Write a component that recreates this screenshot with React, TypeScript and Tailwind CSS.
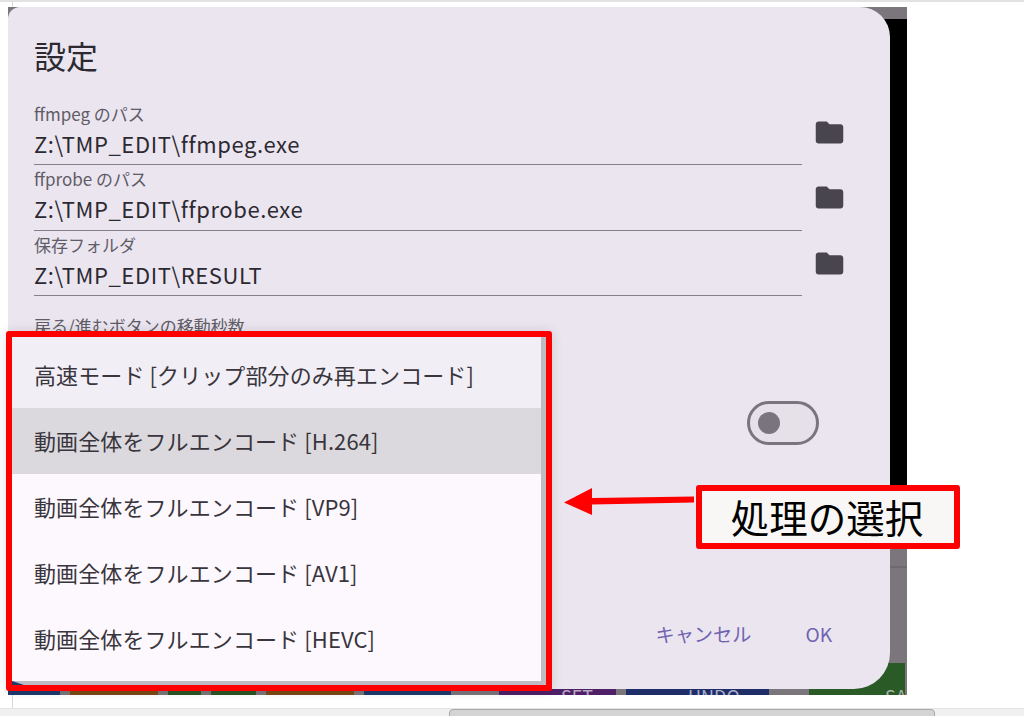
const fontStack = "font-['Noto_Sans_CJK_JP','Noto_Sans',sans-serif]"

const paths = [
  { label: "ffmpeg のパス", value: "Z:\\TMP_EDIT\\ffmpeg.exe" },
  { label: "ffprobe のパス", value: "Z:\\TMP_EDIT\\ffprobe.exe" },
  { label: "保存フォルダ", value: "Z:\\TMP_EDIT\\RESULT" },
]

const modes = [
  { text: "高速モード [クリップ部分のみ再エンコード]", row: "bg-[#f2eef5] h-[71px] pt-[3px]" },
  { text: "動画全体をフルエンコード [H.264]", row: "bg-[#dcd9de] h-[66px] pb-[2px]" },
  { text: "動画全体をフルエンコード [VP9]", row: "bg-[#fdf8fd] h-[66px] pb-[2px]" },
  { text: "動画全体をフルエンコード [AV1]", row: "bg-[#fdf8fd] h-[66px] pb-[2px]" },
  { text: "動画全体をフルエンコード [HEVC]", row: "bg-[#fdf8fd] h-[75px] pb-[11px]" },
]

function FolderIcon() {
  return (
    <svg viewBox="0 0 24 24" className="w-[33px] h-[33px] fill-[#49454f]">
      <path d="M10 4H4c-1.1 0-2 .9-2 2v12c0 1.1.9 2 2 2h16c1.1 0 2-.9 2-2V8c0-1.1-.9-2-2-2h-8l-2-2z" />
    </svg>
  )
}

function PathField({ label, value }: { label: string; value: string }) {
  return (
    <div className="flex h-[65.67px] items-center">
      <div className="w-[768px] h-full border-b-[1.5px] border-[#85818a] flex flex-col pt-[1px]">
        <div className="text-[17px] leading-[25px] text-[#605c66]">{label}</div>
        <div className="text-[22px] leading-[35px] tracking-[0.6px] text-[#2c2a30]">{value}</div>
      </div>
      <div className="ml-[11px]">
        <FolderIcon />
      </div>
    </div>
  )
}

function Backdrop() {
  return (
    <div className="w-[899px] h-[688px] bg-[#7a767b] flex flex-col overflow-hidden">
      <div className="h-[12px] shrink-0" />
      <div className="h-[480px] bg-black shrink-0" />
      <div className="h-[67px] shrink-0" />
      <div className="h-[2px] bg-[#6e6a6f] shrink-0" />
      <div className="h-[95px] shrink-0" />
      <div className="flex text-[18px] leading-[20px] h-[32px] gap-[10px] shrink-0">
        <div className="w-[52px] bg-[#1e3a6e]" />
        <div className="w-[88px] bg-[#7a4a16]" />
        <div className="w-[33px] bg-[#2a5526]" />
        <div className="w-[45px] bg-[#2a5526]" />
        <div className="w-[88px] bg-[#7a4a16]" />
        <div className="w-[87px] bg-[#1e3a6e]" />
        <div className="w-[117px] ml-[38px] bg-[#4f1f68] pt-[23px] pl-[62px] text-[#b9a9c0]">SET</div>
        <div className="w-[143px] bg-[#1f2d68] pt-[23px] pl-[62px] text-[#aab0c8]">UNDO</div>
        <div className="w-[96px] ml-[30px] bg-[#2a5a26] pt-[23px] pl-[76px] overflow-hidden text-[#a9b4a9]">SAVE</div>
      </div>
    </div>
  )
}

function Dialog() {
  return (
    <div className="absolute left-0 top-0 w-[882px] h-[682px] rounded-tl-[12px] rounded-tr-[30px] rounded-br-[36px] bg-[#ebe5f0] pl-[26px] pt-[26px]">
      <h2 className="text-[32px] leading-[44px] text-[#2c2a30]">設定</h2>
      <div className="mt-[22.5px] flex flex-col">
        {paths.map((p) => (
          <PathField key={p.label} label={p.label} value={p.value} />
        ))}
      </div>
      <div className="mt-[18px] text-[17px] leading-[24px] text-[#605c66]">戻る/進むボタンの移動秒数</div>
      <div className="absolute left-[739px] top-[394px] w-[72px] h-[44px] rounded-full border-[3px] border-[#79757e] bg-[#e6e0e9] flex items-center pl-[8px]">
        <div className="w-[22px] h-[22px] rounded-full bg-[#79747e]" />
      </div>
      <div className="absolute left-[647.5px] top-[611px] flex items-center gap-[54px] text-[19.2px] leading-[32px] text-[#6f63b0]">
        <span>キャンセル</span>
        <span>OK</span>
      </div>
    </div>
  )
}

function ModeMenu() {
  return (
    <div className="absolute left-[-2px] top-[324px] w-[546px] h-[360px] rounded-[3px] border-[6px] border-[#ff0000] bg-[#bfbbc3] pr-[5px] pb-[4px] shadow-[0_0_12px_rgba(0,0,0,0.12)]">
      <div className="flex flex-col h-full">
        {modes.map((m) => (
          <div key={m.text} className={`${m.row} flex items-center pl-[22px] text-[22px] tracking-[0.1px] text-[#38353c]`}>
            {m.text}
          </div>
        ))}
      </div>
      <svg viewBox="0 0 12 4" className="absolute left-0 bottom-0 w-[12px] h-[4px]">
        <path d="M0 0 L12 4 L0 4 Z" fill="#1e3a6e" />
      </svg>
    </div>
  )
}

function Callout() {
  return (
    <>
      <svg viewBox="0 0 134 30" className="absolute left-[555px] top-[480px] w-[134px] h-[30px]">
        <path d="M1 15.5 L29 1 L29 11 L131 9.5 L131 15.5 L29 17.5 L29 28 Z" fill="#ff0000" />
      </svg>
      <div className="absolute left-[688px] top-[478px] w-[264px] h-[64px] rounded-[3px] border-[6px] border-[#ff0000] bg-[#f8f7f5] flex items-center justify-center pb-[2px] pr-[2px] text-[38.5px] leading-none text-black">
        処理の選択
      </div>
    </>
  )
}

export default function App() {
  return (
    <div className={`${fontStack} w-[1024px] h-[716px] bg-white flex flex-col overflow-hidden`}>
      <div className="h-[2px] bg-[#e2e2e2] shrink-0" />
      <div className="h-[5px] ml-[12px] border-l border-[#d8d8d8] shrink-0" />
      <div className="ml-[8px] relative w-[899px] h-[688px] shrink-0">
        <Backdrop />
        <Dialog />
        <ModeMenu />
        <Callout />
      </div>
      <div className="h-[13px] ml-[12px] border-l border-[#d8d8d8] shrink-0" />
      <div className="h-[8px] bg-[#f0f0f0] border-t border-[#e4e4e4] pl-[449px] shrink-0">
        <div className="w-[486px] h-[10px] rounded-t-[4px] bg-[#d4d4d4] border border-[#a8a8a8]" />
      </div>
    </div>
  )
}
